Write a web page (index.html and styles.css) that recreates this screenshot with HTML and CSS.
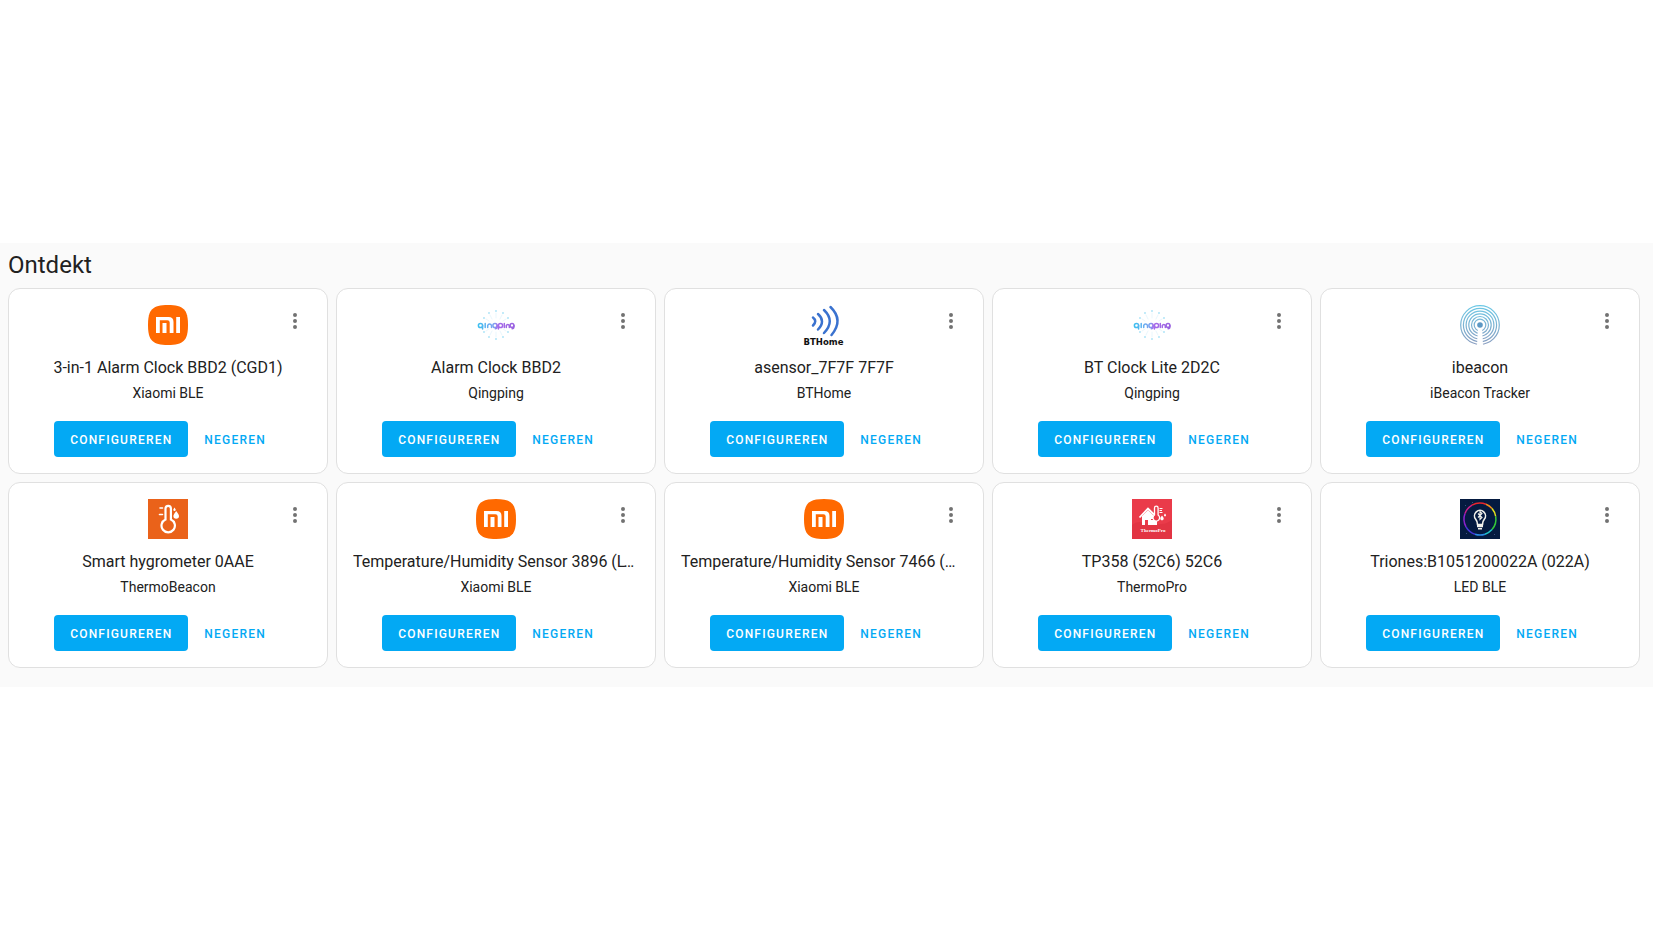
FILE: index.html
```
<!DOCTYPE html>
<html lang="nl">
  <head>
    <meta charset="UTF-8" />
    <meta name="viewport" content="width=device-width, initial-scale=1.0" />
    <title>Integraties</title>
    <link rel="stylesheet" href="styles.css">
  </head>
  <body>
    <!-- shared icons -->
    <svg class="sprite" aria-hidden="true">
      <defs>
        <linearGradient id="qp-grad" gradientUnits="userSpaceOnUse" x1="2" y1="0" x2="38" y2="0">
          <stop offset="0" stop-color="#3cc0f0" />
          <stop offset="0.45" stop-color="#7fa0f0" />
          <stop offset="0.55" stop-color="#a76bea" />
          <stop offset="1" stop-color="#9a63e0" />
        </linearGradient>
        <linearGradient id="ib-grad" gradientUnits="userSpaceOnUse" x1="0" y1="0" x2="0" y2="40">
          <stop offset="0" stop-color="#6cc9e6" />
          <stop offset="1" stop-color="#8a9dc0" />
        </linearGradient>
      </defs>
      <symbol id="dots" viewBox="0 0 24 24">
        <path d="M12,16A2,2 0 0,1 14,18A2,2 0 0,1 12,20A2,2 0 0,1 10,18A2,2 0 0,1 12,16M12,10A2,2 0 0,1 14,12A2,2 0 0,1 12,14A2,2 0 0,1 10,12A2,2 0 0,1 12,10M12,4A2,2 0 0,1 14,6A2,2 0 0,1 12,8A2,2 0 0,1 10,6A2,2 0 0,1 12,4Z" />
      </symbol>
      <symbol id="xiaomi" viewBox="0 0 40 40">
        <path fill="#ff6900" d="M20 0C35.500 0 40 4.500 40 20S35.500 40 20 40S0 35.500 0 20S4.500 0 20 0Z" />
        <path fill="#fff" d="M8 12h12.500q5 0 5 5v11h-3.800V17.500q0-2.300-2.300-2.300H11.800V28H8zM14.500 18h4v10h-4zM28.200 12H32v16h-3.800z" />
      </symbol>
      <symbol id="qingping" viewBox="0 0 40 40">
        <g fill="none" stroke-linecap="round">
          <path stroke="#a8e2f7" stroke-width="1.800" d="M20 6v.1M13 8v.1M27 8v.1M8 13v.1M32 13v.1M8 27v.1M32 27v.1M13 32v.1M27 32v.1M20 34v.1" />
          <path stroke="#eaf7fd" stroke-width="1" d="M20 8v5M14 10l2 4M26 10l-2 4M10 14l3 2M30 14l-3 2M10 26l3-2M30 26l-3-2M14 30l2-4M26 30l-2-4M20 32v-5" />
        </g>
        <g fill="none" stroke="url(#qp-grad)" stroke-width="1.500" stroke-linecap="round">
          <circle cx="4.500" cy="20.500" r="2.100" />
          <path d="M6.600 20.500v3.500M9.200 18.500v4M11.700 22.500v-2a2 2 0 0 1 3.800 0v2" />
          <circle cx="19" cy="20.500" r="2.100" />
          <path d="M21.100 20.500v1.200q0 2-1.800 2" />
          <circle cx="24.500" cy="20.500" r="2.100" />
          <path d="M22.400 20.500v3.500M28.300 18.500v4M30.300 22.500v-2a1.600 1.600 0 0 1 3 0v2" />
          <circle cx="36" cy="20.500" r="1.900" />
          <path d="M37.900 20.500v1.200q0 2-1.800 2" />
        </g>
      </symbol>
      <symbol id="ibeacon" viewBox="0 0 40 40">
        <g fill="none" stroke="url(#ib-grad)" stroke-width="1.200">
          <circle cx="20" cy="20" r="19.300" />
          <circle cx="20" cy="20" r="16.600" />
          <circle cx="20" cy="20" r="13.900" />
          <circle cx="20" cy="20" r="11.200" />
          <circle cx="20" cy="20" r="8.500" />
          <circle cx="20" cy="20" r="5.800" />
        </g>
        <path fill="#fff" d="M18 22h4l1 18h-6z" />
        <circle cx="20" cy="20" r="2.800" fill="#5c98c4" />
      </symbol>
    </svg>

    <main class="panel">
      <h1>Ontdekt</h1>
      <div class="cards">
        <article class="card">
          <div class="card-header">
            <svg class="logo"><use href="#xiaomi" /></svg>
            <button class="menu" aria-label="Menu"><svg><use href="#dots" /></svg></button>
          </div>
          <h2>3-in-1 Alarm Clock BBD2 (CGD1)</h2>
          <h3>Xiaomi BLE</h3>
          <div class="actions">
            <button class="btn btn-primary">Configureren</button>
            <button class="btn">Negeren</button>
          </div>
        </article>

        <article class="card">
          <div class="card-header">
            <svg class="logo"><use href="#qingping" /></svg>
            <button class="menu" aria-label="Menu"><svg><use href="#dots" /></svg></button>
          </div>
          <h2>Alarm Clock BBD2</h2>
          <h3>Qingping</h3>
          <div class="actions">
            <button class="btn btn-primary">Configureren</button>
            <button class="btn">Negeren</button>
          </div>
        </article>

        <article class="card">
          <div class="card-header">
            <svg class="logo" viewBox="0 0 80 80">
              <path fill="none" stroke="#3a72cf" stroke-width="5" stroke-linecap="round" d="M18 25Q27 32 18 41M28 18Q44 32 28 49M40 10Q63 32 40 56M53 4Q80 30 55 60" />
              <text class="bthome-text" x="39" y="79" text-anchor="middle">BTHome</text>
            </svg>
            <button class="menu" aria-label="Menu"><svg><use href="#dots" /></svg></button>
          </div>
          <h2>asensor_7F7F 7F7F</h2>
          <h3>BTHome</h3>
          <div class="actions">
            <button class="btn btn-primary">Configureren</button>
            <button class="btn">Negeren</button>
          </div>
        </article>

        <article class="card">
          <div class="card-header">
            <svg class="logo"><use href="#qingping" /></svg>
            <button class="menu" aria-label="Menu"><svg><use href="#dots" /></svg></button>
          </div>
          <h2>BT Clock Lite 2D2C</h2>
          <h3>Qingping</h3>
          <div class="actions">
            <button class="btn btn-primary">Configureren</button>
            <button class="btn">Negeren</button>
          </div>
        </article>

        <article class="card">
          <div class="card-header">
            <svg class="logo"><use href="#ibeacon" /></svg>
            <button class="menu" aria-label="Menu"><svg><use href="#dots" /></svg></button>
          </div>
          <h2>ibeacon</h2>
          <h3>iBeacon Tracker</h3>
          <div class="actions">
            <button class="btn btn-primary">Configureren</button>
            <button class="btn">Negeren</button>
          </div>
        </article>

        <article class="card">
          <div class="card-header">
            <svg class="logo" viewBox="0 0 40 40">
              <path fill="#ea621a" d="M0 0h40v40H0z" />
              <path fill="none" stroke="#fff" stroke-width="2.200" d="M17.500 20.500V9.500a2.700 2.700 0 0 1 5.400 0v11a6.700 6.700 0 1 1-5.400 0z" />
              <path fill="none" stroke="#fff" stroke-width="1.600" stroke-linecap="round" d="M12 9h2.500M13 15.500h1.500M11.500 15.500h1" />
              <path fill="#fff" d="M28.200 12q2.800 3.500 2.800 5a2.800 2.800 0 0 1-5.600 0q0-1.500 2.800-5zM26.500 8.500q1.200 1.700 1.200 2.300a1.200 1.200 0 0 1-2.400 0q0-.6 1.200-2.300z" />
            </svg>
            <button class="menu" aria-label="Menu"><svg><use href="#dots" /></svg></button>
          </div>
          <h2>Smart hygrometer 0AAE</h2>
          <h3>ThermoBeacon</h3>
          <div class="actions">
            <button class="btn btn-primary">Configureren</button>
            <button class="btn">Negeren</button>
          </div>
        </article>

        <article class="card">
          <div class="card-header">
            <svg class="logo"><use href="#xiaomi" /></svg>
            <button class="menu" aria-label="Menu"><svg><use href="#dots" /></svg></button>
          </div>
          <h2>Temperature/Humidity Sensor 3896 (LYWSDCGQ)</h2>
          <h3>Xiaomi BLE</h3>
          <div class="actions">
            <button class="btn btn-primary">Configureren</button>
            <button class="btn">Negeren</button>
          </div>
        </article>

        <article class="card">
          <div class="card-header">
            <svg class="logo"><use href="#xiaomi" /></svg>
            <button class="menu" aria-label="Menu"><svg><use href="#dots" /></svg></button>
          </div>
          <h2>Temperature/Humidity Sensor 7466 (MHO-C401)</h2>
          <h3>Xiaomi BLE</h3>
          <div class="actions">
            <button class="btn btn-primary">Configureren</button>
            <button class="btn">Negeren</button>
          </div>
        </article>

        <article class="card">
          <div class="card-header">
            <svg class="logo" viewBox="0 0 40 40">
              <path fill="#ea3b4a" d="M0 0h40v40H0z" />
              <path fill="#dc3040" d="M0 26q6-5 11-2t10 2 9-1 10-4v19H0z" opacity=".6" />
              <path fill="none" stroke="#fff" stroke-width="1.800" d="M7.500 18.500L16 9.500l6 6" />
              <path fill="#fff" d="M10 17l6-6 6 6v3h-3v6h-3v-5h-3v5h-3zM19 21h6v5h-6z" />
              <path fill="#ea3b4a" stroke="#fff" stroke-width="1.300" d="M22.500 16V9a1.800 1.800 0 0 1 3.600 0v7a3.300 3.300 0 1 1-3.600 0z" />
              <path stroke="#fff" stroke-width="1" d="M27.500 9.500h3M27.500 11.500h2.500M27.500 13.500h3" />
              <path fill="#fff" d="M30 16.500q3.500 4 0 5-3.500-1 0-5zM33 14.500q2 2.300 0 3-2-.7 0-3z" />
              <text class="thermopro-text" x="21" y="33" text-anchor="middle">ThermoPro</text>
            </svg>
            <button class="menu" aria-label="Menu"><svg><use href="#dots" /></svg></button>
          </div>
          <h2>TP358 (52C6) 52C6</h2>
          <h3>ThermoPro</h3>
          <div class="actions">
            <button class="btn btn-primary">Configureren</button>
            <button class="btn">Negeren</button>
          </div>
        </article>

        <article class="card">
          <div class="card-header">
            <svg class="logo" viewBox="0 0 40 40">
              <path fill="#041a40" d="M0 0h40v40H0z" />
              <path fill="#38507c" d="M5 6h1v1H5zM34 35h1v1h-1zM6 34h1v1H6zM12 3h1v1h-1z" />
              <g fill="none" stroke-width="1.500">
                <path stroke="#e8262c" d="M12 6.100A16 16 0 0 1 26 5.200" />
                <path stroke="#f08a1c" d="M26 5.200A16 16 0 0 1 32 9.400" />
                <path stroke="#e3e01e" d="M32 9.400A16 16 0 0 1 35.700 17.500" />
                <path stroke="#35c83a" d="M35.700 17.500A16 16 0 0 1 32 30.600" />
                <path stroke="#1fc6c8" d="M32 30.600A16 16 0 0 1 25 35.200" />
                <path stroke="#2b8ce8" d="M25 35.200A16 16 0 0 1 15 35.200" />
                <path stroke="#4436d8" d="M15 35.200A16 16 0 0 1 6 27.800" />
                <path stroke="#8a22cc" d="M6 27.800A16 16 0 0 1 5 14.500" />
                <path stroke="#c8208c" d="M5 14.500A16 16 0 0 1 12 6.100" />
              </g>
              <path fill="none" stroke="#f2f2ec" stroke-width="1.600" d="M17.500 25.500q0-3-1.800-5.200a5.500 5.500 0 1 1 8.600 0q-1.800 2.200-1.800 5.200z" />
              <path fill="none" stroke="#f2f2ec" stroke-width="1.100" d="M18 14.500l4 4-2 2v-8l2 2-4 4" />
              <path fill="#f2f2ec" d="M17 26h6v2.200h-6zM18 29h4v1.500h-4z" />
            </svg>
            <button class="menu" aria-label="Menu"><svg><use href="#dots" /></svg></button>
          </div>
          <h2>Triones:B1051200022A (022A)</h2>
          <h3>LED BLE</h3>
          <div class="actions">
            <button class="btn btn-primary">Configureren</button>
            <button class="btn">Negeren</button>
          </div>
        </article>
      </div>
    </main>
  </body>
</html>
```

FILE: styles.css
```
:root {
  --primary: #03a9f4;
  --text: #212121;
  --icon: #727272;
  --panel-bg: #fafafa;
  --divider: #e0e0e0;
}

body {
  margin: 0;
  min-height: 100vh;
  display: flex;
  flex-direction: column;
  justify-content: center;
  font-family: Roboto, sans-serif;
  color: var(--text);
  background: #fff;
}

.sprite {
  display: block;
  width: 0;
  height: 0;
}

.panel {
  padding: 0 13px 19px 8px;
  background: var(--panel-bg);
}

h1 {
  margin: 0;
  padding-bottom: 1px;
  font-size: 24px;
  font-weight: 400;
  line-height: 44px;
}

.cards {
  display: grid;
  grid-template-columns: repeat(auto-fill, minmax(300px, 1fr));
  gap: 8px;
}

.card {
  min-width: 0;
  box-sizing: border-box;
  padding: 16px;
  background: #fff;
  border: 1px solid var(--divider);
  border-radius: 12px;
  text-align: center;
}

.card-header {
  display: grid;
  grid-template-columns: 1fr 40px 1fr;
}

.logo {
  grid-column: 2;
  width: 40px;
  height: 40px;
  overflow: visible;
}

/* 48px touch target reaching into the card padding */
.menu {
  justify-self: end;
  width: 48px;
  height: 48px;
  margin: -8px -8px 0 0;
  padding: 12px;
  border: none;
  background: none;
  cursor: pointer;
}

.menu svg {
  display: block;
  width: 24px;
  height: 24px;
  fill: var(--icon);
}

h2 {
  margin: 11px 0 0;
  overflow: hidden;
  font-size: 16px;
  font-weight: 400;
  line-height: 24px;
  text-overflow: ellipsis;
  white-space: nowrap;
}

h3 {
  margin: 3px 0 18px;
  font-size: 14px;
  font-weight: 400;
  line-height: 20px;
}

.actions {
  display: flex;
  justify-content: center;
}

.btn {
  height: 36px;
  padding: 2px 16px 0;
  border: none;
  border-radius: 4px;
  background: none;
  color: var(--primary);
  font-family: inherit;
  font-size: 12px;
  font-weight: 500;
  letter-spacing: 0.1em;
  text-transform: uppercase;
  cursor: pointer;
}

.btn-primary {
  background: var(--primary);
  color: #fff;
}

.bthome-text {
  font: 700 17px "DejaVu Sans", sans-serif;
  fill: #111;
}

.thermopro-text {
  font: 700 5px "Liberation Serif", serif;
  fill: #fff;
}
```
